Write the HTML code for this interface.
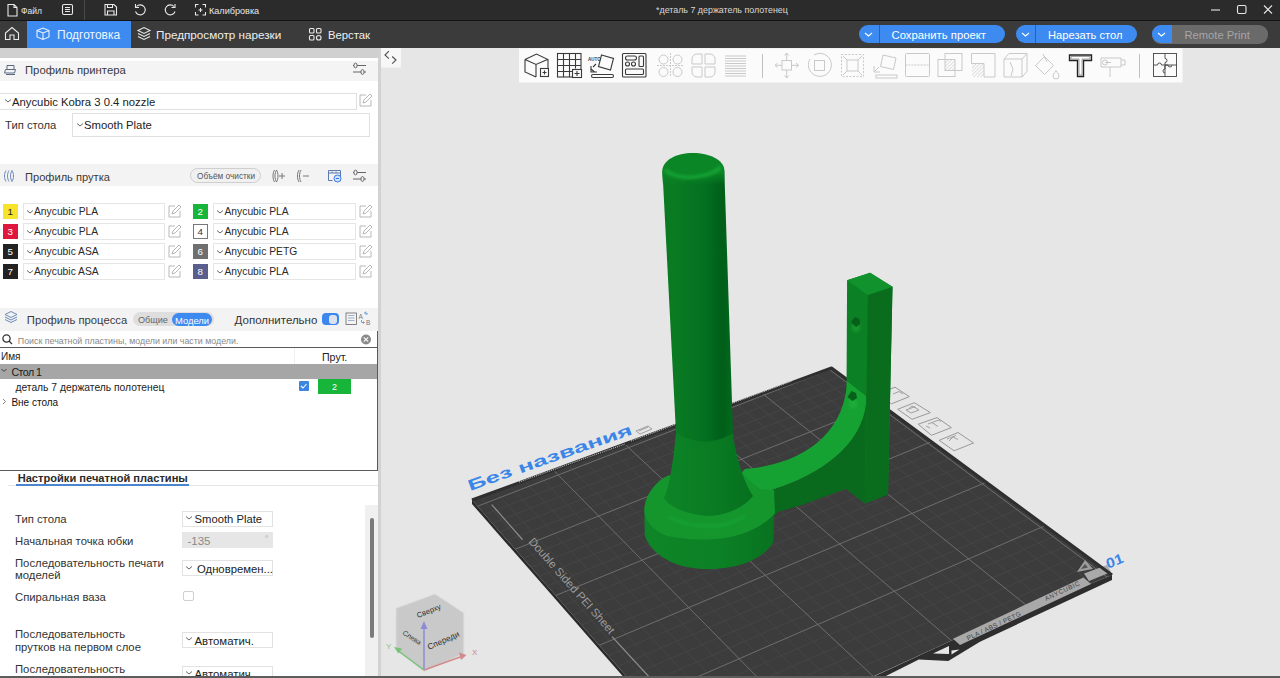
<!DOCTYPE html>
<html><head><meta charset="utf-8">
<style>
*{margin:0;padding:0;box-sizing:border-box}
html,body{width:1280px;height:678px;overflow:hidden;background:#e6e6e6;font-family:"Liberation Sans",sans-serif;position:relative}
.a{position:absolute;white-space:nowrap;line-height:normal}
svg{position:absolute;overflow:visible}
</style></head><body>
<div class="a" style="left:0px;top:0px;width:1280px;height:20px;background:#2b2b2b;"></div>
<div class="a" style="left:0px;top:20px;width:1280px;height:1px;background:#141414;"></div>
<div class="a" style="left:84px;top:0px;width:1px;height:20px;background:#4a4a4a;"></div>
<div class="a" style="left:21px;top:5.92px;font-size:8.5px;color:#e8e8e8;font-weight:normal;">Файл</div>
<div class="a" style="left:209px;top:5.53px;font-size:9.1px;color:#e8e8e8;font-weight:normal;">Калибровка</div>
<div class="a" style="left:656px;top:4.93px;font-size:8.9px;color:#d8d8d8;font-weight:normal;">*деталь 7 держатель полотенец</div>
<div class="a" style="left:0px;top:21px;width:1280px;height:27px;background:#3b3b3b;"></div>
<div class="a" style="left:27px;top:21px;width:104px;height:27px;background:#3d8bf0;"></div>
<div class="a" style="left:57px;top:28.24px;font-size:12px;color:#eef5ff;font-weight:normal;">Подготовка</div>
<div class="a" style="left:156px;top:28.38px;font-size:11.7px;color:#eeeeee;font-weight:normal;">Предпросмотр нарезки</div>
<div class="a" style="left:328px;top:28.58px;font-size:11.3px;color:#eeeeee;font-weight:normal;">Верстак</div>
<div class="a" style="left:859px;top:25px;width:146px;height:18px;background:#3d8bf0;border-radius:9px"></div>
<div class="a" style="left:879px;top:25px;width:1px;height:18px;background:#2a62b0;"></div>
<div class="a" style="left:891.5px;top:28.78px;font-size:11.3px;color:#ffffff;font-weight:normal;">Сохранить проект</div>
<div class="a" style="left:1016px;top:25px;width:121px;height:18px;background:#3d8bf0;border-radius:9px"></div>
<div class="a" style="left:1035px;top:25px;width:1px;height:18px;background:#2a62b0;"></div>
<div class="a" style="left:1048px;top:28.85px;font-size:11.15px;color:#ffffff;font-weight:normal;">Нарезать стол</div>
<div class="a" style="left:1152px;top:25px;width:115.5px;height:18.5px;background:#6a6a6a;border-radius:9px"></div>
<div class="a" style="left:1152px;top:25px;width:20px;height:18px;background:#3d8bf0;border-radius:9px 0 0 9px"></div>
<div class="a" style="left:1184.5px;top:28.82px;font-size:11.2px;color:#a6a6a6;font-weight:normal;">Remote Print</div>
<div class="a" style="left:0px;top:48px;width:378px;height:630px;background:#ffffff;"></div>
<div class="a" style="left:0px;top:48px;width:378px;height:10px;background:#d0d0d0;"></div>
<div class="a" style="left:378px;top:48px;width:3px;height:630px;background:#d2d2d2;"></div>
<div class="a" style="left:0px;top:61px;width:378px;height:20px;background:#f4f4f4;"></div>
<div class="a" style="left:25px;top:63.68px;font-size:11.3px;color:#3a3a3a;font-weight:normal;">Профиль принтера</div>
<div class="a" style="left:0px;top:93px;width:357px;height:17px;background:#fff;border:1px solid #e0e0e0;border-left:none"></div>
<div class="a" style="left:12px;top:95.88px;font-size:11.3px;color:#222;font-weight:normal;">Anycubic Kobra 3 0.4 nozzle</div>
<div class="a" style="left:5px;top:118.90px;font-size:11.25px;color:#333;font-weight:normal;">Тип стола</div>
<div class="a" style="left:72px;top:113px;width:298px;height:24px;background:#fff;border:1px solid #e0e0e0"></div>
<div class="a" style="left:84px;top:119.08px;font-size:11.3px;color:#222;font-weight:normal;">Smooth Plate</div>
<div class="a" style="left:0px;top:164px;width:378px;height:22px;background:#f3f3f3;"></div>
<div class="a" style="left:25px;top:170.67px;font-size:11.1px;color:#3a3a3a;font-weight:normal;">Профиль прутка</div>
<div class="a" style="left:190px;top:168px;width:71px;height:15px;background:#f0f0f0;border:1px solid #cfcfcf;border-radius:8px"></div>
<div class="a" style="left:197px;top:172.04px;font-size:8.25px;color:#555;font-weight:normal;">Объём очистки</div>
<div class="a" style="left:3px;top:204px;width:15px;height:15px;background:#f7e32a;"></div>
<div class="a" style="left:7.6px;top:206.10px;font-size:9.8px;color:#222;font-weight:normal;">1</div>
<div class="a" style="left:23px;top:203px;width:142px;height:17px;background:#fff;border:1px solid #e6e6e6"></div>
<div class="a" style="left:34px;top:206.06px;font-size:10.3px;color:#2a2a2a;font-weight:normal;">Anycubic PLA</div>
<div class="a" style="left:193px;top:204px;width:15px;height:15px;background:#17b53a;"></div>
<div class="a" style="left:197.6px;top:206.10px;font-size:9.8px;color:#fff;font-weight:normal;">2</div>
<div class="a" style="left:213px;top:203px;width:143px;height:17px;background:#fff;border:1px solid #e6e6e6"></div>
<div class="a" style="left:224.5px;top:206.06px;font-size:10.3px;color:#2a2a2a;font-weight:normal;">Anycubic PLA</div>
<div class="a" style="left:3px;top:224px;width:15px;height:15px;background:#e0173c;"></div>
<div class="a" style="left:7.6px;top:226.10px;font-size:9.8px;color:#fff;font-weight:normal;">3</div>
<div class="a" style="left:23px;top:223px;width:142px;height:17px;background:#fff;border:1px solid #e6e6e6"></div>
<div class="a" style="left:34px;top:226.06px;font-size:10.3px;color:#2a2a2a;font-weight:normal;">Anycubic PLA</div>
<div class="a" style="left:193px;top:224px;width:15px;height:15px;background:#fff;border:1px solid #777;"></div>
<div class="a" style="left:197.6px;top:226.10px;font-size:9.8px;color:#333;font-weight:normal;">4</div>
<div class="a" style="left:213px;top:223px;width:143px;height:17px;background:#fff;border:1px solid #e6e6e6"></div>
<div class="a" style="left:224.5px;top:226.06px;font-size:10.3px;color:#2a2a2a;font-weight:normal;">Anycubic PLA</div>
<div class="a" style="left:3px;top:244px;width:15px;height:15px;background:#222;"></div>
<div class="a" style="left:7.6px;top:246.10px;font-size:9.8px;color:#fff;font-weight:normal;">5</div>
<div class="a" style="left:23px;top:243px;width:142px;height:17px;background:#fff;border:1px solid #e6e6e6"></div>
<div class="a" style="left:34px;top:246.06px;font-size:10.3px;color:#2a2a2a;font-weight:normal;">Anycubic ASA</div>
<div class="a" style="left:193px;top:244px;width:15px;height:15px;background:#6f6f6f;"></div>
<div class="a" style="left:197.6px;top:246.10px;font-size:9.8px;color:#fff;font-weight:normal;">6</div>
<div class="a" style="left:213px;top:243px;width:143px;height:17px;background:#fff;border:1px solid #e6e6e6"></div>
<div class="a" style="left:224.5px;top:246.06px;font-size:10.3px;color:#2a2a2a;font-weight:normal;">Anycubic PETG</div>
<div class="a" style="left:3px;top:264px;width:15px;height:15px;background:#222;"></div>
<div class="a" style="left:7.6px;top:266.10px;font-size:9.8px;color:#fff;font-weight:normal;">7</div>
<div class="a" style="left:23px;top:263px;width:142px;height:17px;background:#fff;border:1px solid #e6e6e6"></div>
<div class="a" style="left:34px;top:266.06px;font-size:10.3px;color:#2a2a2a;font-weight:normal;">Anycubic ASA</div>
<div class="a" style="left:193px;top:264px;width:15px;height:15px;background:#5a5e8c;"></div>
<div class="a" style="left:197.6px;top:266.10px;font-size:9.8px;color:#fff;font-weight:normal;">8</div>
<div class="a" style="left:213px;top:263px;width:143px;height:17px;background:#fff;border:1px solid #e6e6e6"></div>
<div class="a" style="left:224.5px;top:266.06px;font-size:10.3px;color:#2a2a2a;font-weight:normal;">Anycubic PLA</div>
<div class="a" style="left:0px;top:308px;width:378px;height:23px;background:#f3f3f3;"></div>
<div class="a" style="left:26.8px;top:314.10px;font-size:11.25px;color:#3a3a3a;font-weight:normal;">Профиль процесса</div>
<div class="a" style="left:132.6px;top:312.2px;width:81px;height:14.2px;background:#dedede;border-radius:7px"></div>
<div class="a" style="left:171.8px;top:313px;width:40.6px;height:13px;background:#3d8bf0;border-radius:7px"></div>
<div class="a" style="left:137.9px;top:315.13px;font-size:9.1px;color:#666;font-weight:normal;">Общие</div>
<div class="a" style="left:175px;top:314.99px;font-size:9.4px;color:#fff;font-weight:normal;">Модели</div>
<div class="a" style="left:234.6px;top:313.78px;font-size:11.5px;color:#333;font-weight:normal;">Дополнительно</div>
<div class="a" style="left:321.5px;top:313.2px;width:17.5px;height:12.2px;background:#3d86ee;border-radius:4px"></div>
<div class="a" style="left:328.5px;top:315px;width:8.5px;height:8.5px;background:#dde3ee;border-radius:3px"></div>
<div class="a" style="left:0px;top:331px;width:377px;height:16px;background:#fff;"></div>
<div class="a" style="left:0px;top:347px;width:378px;height:1px;background:#5a5a5a;"></div>
<div class="a" style="left:17.8px;top:335.95px;font-size:8.85px;color:#8a8a8a;font-weight:normal;">Поиск печатной пластины, модели или части модели.</div>
<div class="a" style="left:377px;top:331px;width:1px;height:140px;background:#5a5a5a;"></div>
<div class="a" style="left:1px;top:351.20px;font-size:10px;color:#222;font-weight:normal;">Имя</div>
<div class="a" style="left:322px;top:351.41px;font-size:10.6px;color:#222;font-weight:normal;">Прут.</div>
<div class="a" style="left:293.5px;top:348px;width:1px;height:16px;background:#f0f0f0;"></div>
<div class="a" style="left:0px;top:364px;width:377px;height:15px;background:#a6a6a6;"></div>
<div class="a" style="left:11.4px;top:365.91px;font-size:10.6px;color:#1a1a1a;font-weight:normal;letter-spacing:-0.5px">Стол 1</div>
<div class="a" style="left:15.4px;top:381.86px;font-size:10.3px;color:#222;font-weight:normal;">деталь 7 держатель полотенец</div>
<div class="a" style="left:299.2px;top:381.3px;width:10px;height:10px;background:#3a86e0;border-radius:1px"></div>
<div class="a" style="left:318px;top:378.8px;width:33px;height:15px;background:#17b53a;"></div>
<div class="a" style="left:332px;top:382.18px;font-size:9px;color:#fff;font-weight:normal;">2</div>
<div class="a" style="left:11.4px;top:396.90px;font-size:10px;color:#111;font-weight:normal;">Вне стола</div>
<div class="a" style="left:0px;top:470px;width:378px;height:1px;background:#5a5a5a;"></div>
<div class="a" style="left:17.7px;top:471.87px;font-size:11.1px;color:#2a2a2a;font-weight:bold;">Настройки печатной пластины</div>
<div class="a" style="left:8px;top:485px;width:370px;height:1px;background:#e6e6e6;"></div>
<div class="a" style="left:16px;top:484px;width:173px;height:1.5px;background:#4a86d0;"></div>
<div class="a" style="left:15px;top:512.88px;font-size:11.3px;color:#333;font-weight:normal;">Тип стола</div>
<div class="a" style="left:15px;top:534.88px;font-size:11.3px;color:#333;font-weight:normal;">Начальная точка юбки</div>
<div class="a" style="left:15px;top:556.58px;font-size:11.3px;color:#333;font-weight:normal;">Последовательность печати</div>
<div class="a" style="left:15px;top:569.08px;font-size:11.3px;color:#333;font-weight:normal;">моделей</div>
<div class="a" style="left:15px;top:590.88px;font-size:11.3px;color:#333;font-weight:normal;">Спиральная ваза</div>
<div class="a" style="left:15px;top:628.38px;font-size:11.3px;color:#333;font-weight:normal;">Последовательность</div>
<div class="a" style="left:15px;top:640.58px;font-size:11.3px;color:#333;font-weight:normal;">прутков на первом слое</div>
<div class="a" style="left:15px;top:662.58px;font-size:11.3px;color:#333;font-weight:normal;">Последовательность</div>
<div class="a" style="left:182.3px;top:510.8px;width:91px;height:16.1px;background:#fff;border:1px solid #e2e2e2"></div>
<div class="a" style="left:194.5px;top:513.10px;font-size:11.25px;color:#222;font-weight:normal;">Smooth Plate</div>
<div class="a" style="left:182.3px;top:532.3px;width:91px;height:16.1px;background:#e6e6e6;"></div>
<div class="a" style="left:187.5px;top:534.78px;font-size:11.5px;color:#8a8a8a;font-weight:normal;">-135</div>
<div class="a" style="left:265px;top:534.16px;font-size:8px;color:#999;font-weight:normal;">°</div>
<div class="a" style="left:182.3px;top:560.3px;width:91px;height:16.1px;background:#fff;border:1px solid #e2e2e2"></div>
<div class="a" style="left:197px;top:562.88px;font-size:11.3px;color:#222;font-weight:normal;">Одновремен...</div>
<div class="a" style="left:183.3px;top:591.2px;width:11.2px;height:10.3px;background:#fff;border:1px solid #cfcfcf;border-radius:2px"></div>
<div class="a" style="left:182.3px;top:632px;width:91px;height:16.1px;background:#fff;border:1px solid #e2e2e2"></div>
<div class="a" style="left:194.5px;top:634.53px;font-size:11.4px;color:#222;font-weight:normal;">Автоматич.</div>
<div class="a" style="left:182.3px;top:665.8px;width:91px;height:16.1px;background:#fff;border:1px solid #e2e2e2"></div>
<div class="a" style="left:194.5px;top:668.33px;font-size:11.4px;color:#222;font-weight:normal;">Автоматич.</div>
<div class="a" style="left:365px;top:505px;width:13px;height:173px;background:#f0f0f0;"></div>
<div class="a" style="left:369.8px;top:517.9px;width:3.8px;height:120px;background:#7a7a7a;border-radius:2px"></div>
<svg id="scene" width="900" height="630" viewBox="380 48 900 630" style="left:380px;top:48px;overflow:hidden"><polygon points="472.0,500.0 697.0,757.0 697,761 472,504" fill="#2b2b2b"/>
<polygon points="1112,575 1112,580 980,641.7 948.3,661 918.8,659.5 880,679 697,763 697,757 876,675.6 951.6,640.6" fill="#2e2e2e"/>
<polygon points="933,653.5 949,646 949,654" fill="#e6e6e6"/><polygon points="951.5,650.5 959.5,649.5 951.5,654.5" fill="#e6e6e6"/>
<polygon points="472.0,500.0 831.5,368.0 1112,575 951.6,640.6 697.0,757.0" fill="#3c3c3c"/>
<clipPath id="bedclip"><polygon points="472.0,500.0 831.5,368.0 1112,575 951.6,640.6 697.0,757.0"/></clipPath>
<path clip-path="url(#bedclip)" d="M703.8,771.6L462.6,498.8M720.9,763.9L477.1,493.2M738.0,756.1L491.6,487.6M754.9,748.5L506.1,482.0M771.7,740.8L520.4,476.5M788.5,733.3L534.7,471.0M805.1,725.7L548.9,465.5M821.6,718.3L563.1,460.0M838.0,710.8L577.1,454.6M854.3,703.5L591.1,449.2M870.5,696.1L605.0,443.8M886.6,688.8L618.9,438.5M902.6,681.6L632.7,433.2M918.6,674.4L646.4,427.9M934.4,667.2L660.1,422.6M950.1,660.1L673.6,417.4M965.7,653.0L687.2,412.2M981.3,646.0L700.6,407.0M996.7,639.0L714.0,401.8M1012.1,632.0L727.3,396.7M1027.3,625.1L740.6,391.6M1042.5,618.2L753.7,386.5M1057.6,611.4L766.9,381.5M1072.6,604.6L779.9,376.4M1087.5,597.9L792.9,371.4M1102.3,591.1L805.8,366.4M1117.0,584.5L818.7,361.5M1131.7,577.8L831.5,356.5M703.8,771.6L1134.6,576.5M693.0,759.4L1121.3,566.8M682.4,747.4L1108.2,557.1M671.9,735.5L1095.4,547.7M661.6,723.9L1082.7,538.4M651.5,712.5L1070.2,529.2M641.5,701.2L1057.9,520.1M631.7,690.1L1045.7,511.2M622.1,679.2L1033.8,502.4M612.6,668.5L1022.0,493.8M603.3,657.9L1010.4,485.2M594.1,647.5L999.0,476.8M585.0,637.3L987.7,468.5M576.1,627.2L976.6,460.3M567.3,617.2L965.6,452.3M558.6,607.4L954.8,444.3M550.1,597.8L944.2,436.5M541.7,588.3L933.6,428.8M533.4,578.9L923.3,421.1M525.2,569.7L913.0,413.6M517.2,560.6L902.9,406.2M509.3,551.6L893.0,398.9M501.5,542.8L883.2,391.6M493.8,534.1L873.5,384.5M486.2,525.5L863.9,377.5M478.7,517.0L854.4,370.5M471.3,508.7L845.1,363.6M464.0,500.4L835.9,356.9" stroke="#474747" stroke-width="0.8" fill="none"/>
<path clip-path="url(#bedclip)" d="M805.1,725.7L548.9,465.5M886.6,688.8L618.9,438.5M965.7,653.0L687.2,412.2M1042.5,618.2L753.7,386.5M1117.0,584.5L818.7,361.5M641.5,701.2L1057.9,520.1M594.1,647.5L999.0,476.8M550.1,597.8L944.2,436.5M509.3,551.6L893.0,398.9M471.3,508.7L845.1,363.6" stroke="#6c6c6c" stroke-width="1" fill="none"/>
<path d="M491.7,504.6 L522.6,539.7 M612,636.6 L651,679" stroke="#8c8c8c" stroke-width="1.3"/>
<text transform="matrix(0.66,0.75,-0.75,0.66,528,542)" font-family="Liberation Sans" font-size="11.5" fill="#9a9a9a">Double Sided PEI Sheet</text>
<polygon points="953,638.7 1083.4,577.4 1091,584 960,645" fill="#a9a9a9"/>
<polygon points="1084,573.5 1107,565 1111,572 1089,581" fill="#a9a9a9"/>
<text transform="matrix(0.905,-0.425,0.425,0.905,968,640.5)" font-family="Liberation Sans" font-size="6.5" fill="#444" letter-spacing="0.4">PLA / ABS / PETG</text>
<text transform="matrix(0.905,-0.425,0.425,0.905,1046,601)" font-family="Liberation Sans" font-size="6.5" fill="#444" letter-spacing="0.6">ANYCUBIC</text>
<path d="M1077,572 l8,-12 8,9z" fill="#9c9c9c"/><path d="M1081,569 l4,-5 3,3.5z" fill="#555"/>
<text transform="matrix(0.95,-0.42,0.3,0.85,1108,569)" font-family="Liberation Sans" font-weight="bold" font-size="15.5" fill="#3a86e8">01</text>
<text transform="matrix(1.36,-0.475,0.3,0.8,470,491)" font-family="Liberation Sans" font-weight="bold" font-size="18" fill="#3a86e8">Без названия</text>
<g fill="none" stroke="#a0a0a0" stroke-width="1"><path d="M636,431 l12,-5 4,3 -12,5z M639,431 l9,-4"/></g>
<polygon points="897.7,409.3 914.3,402.7 930.4,412.6 912.1,419.3" fill="none" stroke="#999" stroke-width="1" stroke-linejoin="round"/>
<polygon points="918.2,424.2 937,417.6 951.4,427.6 931.5,435.3" fill="none" stroke="#999" stroke-width="1" stroke-linejoin="round"/>
<polygon points="939.2,440.3 958,432.5 973.5,443 954.1,450.8" fill="none" stroke="#999" stroke-width="1" stroke-linejoin="round"/>
<polygon points="877,394 895,387.2 909.3,396.6 891.6,403.8" fill="none" stroke="#999" stroke-width="1" stroke-linejoin="round"/>
<g fill="none" stroke="#999" stroke-width="0.9"><path d="M906,410 l8,-3 5,3 -8,3z M909,408.5 l3,-2.5 4,1.5"/><path d="M926,426 l4,2 M928,424 l8,-3 M932,422.5 l6,4 M936,421 l3,-1 2,1.5"/><path d="M947,439 l9,-3.5 M949,441 l4,-4 5,2.5"/><path d="M893,394 l6,-2.5 4,2.5"/></g>
<path d="M472.0,500.0 L831.5,368.0 L1112.0,575.0" stroke="#2f2f2f" stroke-width="3" fill="none" stroke-linejoin="round"/>
<path d="M519,482 L625,444 M631,441 L792,381" stroke="#b8b8b8" stroke-width="1.2" stroke-dasharray="1 1"/><defs>
<linearGradient id="gpole" x1="0" x2="1" y1="0" y2="0"><stop offset="0" stop-color="#0a7a22"/><stop offset="0.15" stop-color="#0b7b23"/><stop offset="0.6" stop-color="#037020"/><stop offset="0.85" stop-color="#005e19"/><stop offset="1" stop-color="#026a1c"/></linearGradient>
<linearGradient id="gcone" x1="0" x2="1" y1="0" y2="0"><stop offset="0" stop-color="#0d8426"/><stop offset="0.5" stop-color="#0a7c23"/><stop offset="1" stop-color="#06701f"/></linearGradient>
<linearGradient id="gside" x1="0" x2="1" y1="0" y2="0"><stop offset="0" stop-color="#0e8627"/><stop offset="0.6" stop-color="#0c8025"/><stop offset="1" stop-color="#087220"/></linearGradient>
<linearGradient id="gcap" x1="0" x2="0" y1="0" y2="1"><stop offset="0" stop-color="#118d2b"/><stop offset="1" stop-color="#17972f"/></linearGradient>
<filter id="blur1" x="-20%" y="-50%" width="140%" height="200%"><feGaussianBlur stdDeviation="1.6"/></filter>
</defs>
<polygon points="847.1,280.3 870.1,272.7 892.5,286.8 888.0,494.6 865.0,503.4 846.0,488.7" fill="#0c8024"/>
<polygon points="867.8,295.0 892.5,286.8 888.0,494.6 865.0,503.4" fill="#0a6d1e"/>
<polygon points="847.1,280.3 870.1,272.7 892.5,286.8 867.8,295.0" fill="#12922c"/>
<path d="M847,381 L866,396 L865,503.4 L846,488.7 L802,505 L778,512 L769,522 L769,490 L774,489 C820,475 862,445 866,403 Z" fill="#09691c"/>
<path d="M847,381 C845,432 805,464 745,469 L735,480 L760,495 L774,489 C820,475 862,445 866,403 L866,396 Z" fill="#16a232"/>
<path d="M644.2,506 L644.8,535 C649,550 665,561 682,566 C702,571 726,570 746,563 C760,557 770,550 773.5,541 L774,516 L774.5,490 L760,495 Z" fill="url(#gside)"/>
<path d="M644.7,513 C646,523 655,532 668,536 C690,541 720,541 742,534 C758,528 770,520 775,513 L774,490 L760,489 C745,478 740,470 735,465 C720,470 690,470 667,476 C655,482 646,495 644.7,506 Z" fill="#14962d"/>
<path d="M676,433 C673,462 670,485 664,498 C668,506 685,514 706,516 C728,516 745,506 753,496 C745,484 737,462 732.6,433 Z" fill="url(#gcone)"/>
<path d="M668,517 C682,524 700,526.5 714,526 C727,525 737,521 745,516" stroke="#19a836" stroke-width="2.5" fill="none" filter="url(#blur1)" opacity="0.75"/>
<path d="M662.5,172 L676,433 C685,439 700,442 706,441.4 C715,441 726,438 733,433 L724.3,170 Z" fill="url(#gpole)"/>
<linearGradient id="gcap2" x1="0" x2="0" y1="0" y2="1"><stop offset="0" stop-color="#0b8626"/><stop offset="0.6" stop-color="#0b8626"/><stop offset="1" stop-color="#0b8626" stop-opacity="0"/></linearGradient><path d="M662.2,185 L662.2,171 C663,160 676,153 693,153 C710,153 723,160 724.2,169 L724.6,185 Z" fill="url(#gcap2)"/>
<path d="M665,170 C672,176 684,178 694,177 C706,176 716,172 721,167" stroke="#16a534" stroke-width="3.5" fill="none" filter="url(#blur1)"/>
<ellipse cx="856" cy="327.5" rx="4.2" ry="4.5" fill="#14962e" filter="url(#blur1)"/><path d="M851,322 l4,-5 4.5,2 0.5,5 -4,3z" fill="#065e19"/>
<ellipse cx="853" cy="404" rx="4.2" ry="5" fill="#1cac38" filter="url(#blur1)"/><path d="M847.5,397 l4,-6 4.5,2 1,5 -4.5,3z" fill="#06601a"/><rect x="519" y="48.5" width="663.5" height="34" fill="#fbfbfb"/>
<g fill="none" stroke="#3a3a3a" stroke-width="1.1"><path d="M525 59.5l11.5-5.5 11.5 5.5v8.5 M525 59.5v12.5l11 5 M525 59.5l11 5 11.5-5 M536 64.5v12.5"/><rect x="540.5" y="68.5" width="8" height="8" fill="#fbfbfb"/><path d="M544.5 70.5v4M542.5 72.5h4"/></g>
<g fill="none" stroke="#3a3a3a" stroke-width="1.1"><rect x="557.5" y="53.5" width="23.5" height="23.5"/><path d="M563.5 53.5v23.5M569.5 53.5v23.5M575.5 53.5v15M557.5 59.5h23.5M557.5 65.5h23.5M557.5 71.5h15"/><rect x="572.5" y="69.5" width="9" height="8" fill="#fbfbfb"/><path d="M577 71v5M574.5 73.5h5"/></g>
<g fill="none" stroke="#3a3a3a" stroke-width="1.1"><path d="M601.5 55l12 3.5-3 11.5-12-3.5z"/><path d="M593 67l3-3M590.5 68.5l4 3.5M591 66v6h6"/><rect x="591.5" y="74.5" width="22" height="3" rx="1.5"/></g><text x="588" y="61" font-size="4.5" font-family="Liberation Sans" font-weight="bold" fill="#3a3a3a">AUTO</text>
<g fill="none" stroke="#3a3a3a" stroke-width="1.1"><rect x="622.5" y="53.5" width="23.5" height="23.5" rx="1"/><rect x="625.5" y="56" width="11" height="4" rx="2"/><rect x="639" y="56" width="4.5" height="10.5" rx="1"/><circle cx="627.5" cy="64" r="2"/><circle cx="633.5" cy="64" r="2"/><rect x="625.5" y="69" width="18" height="5.5" rx="1"/></g>
<g fill="none" stroke="#c9c9c9" stroke-width="1"><circle cx="663.5" cy="59.5" r="4.5"/><circle cx="677.5" cy="59.5" r="4.5"/><circle cx="663.5" cy="72" r="4.5"/><circle cx="677.5" cy="72" r="4.5"/><path d="M670.5 53v24M657 65.5h26" stroke-dasharray="2 1"/></g>
<g fill="none" stroke="#c9c9c9" stroke-width="1"><path d="M702 54h-5a5 5 0 0 0-5 5v5h10z M705 54h5a5 5 0 0 1 5 5v5h-10z M702 77h-5a5 5 0 0 1-5-5v-5h10z M705 77h5a5 5 0 0 0 5-5v-5h-10z"/></g>
<g fill="none" stroke="#c9c9c9" stroke-width="1.2"><path d="M725 56h21M725 58.5h21M725 61h21M725 63.5h21M725 66h21M725 68.5h21M725 71h21M725 73.5h21M725 76h21"/></g>
<path d="M762.5 54v24" stroke="#c0c0c0" stroke-width="1"/>
<g fill="none" stroke="#c9c9c9" stroke-width="1"><rect x="782" y="60.5" width="9.5" height="9.5"/><path d="M786.7 53v7M786.7 70v8M775 65.3h7M791.5 65.3h7 M784.5 55.5l2.2-2.5 2.2 2.5 M784.5 75.5l2.2 2.5 2.2-2.5 M777.5 63l-2.5 2.3 2.5 2.3 M796 63l2.5 2.3-2.5 2.3"/></g>
<g fill="none" stroke="#c9c9c9" stroke-width="1"><rect x="814.5" y="60.5" width="10" height="10"/><path d="M810 59a11.5 11.5 0 1 0 4-4"/></g>
<g fill="none" stroke="#c9c9c9" stroke-width="1"><rect x="847" y="60" width="11" height="11"/><rect x="841.5" y="54.5" width="22" height="22" stroke-dasharray="2 1.5"/><path d="M843 56l4 4M862 56l-4 4M843 75l4-4M862 75l-4-4"/></g>
<g fill="none" stroke="#c9c9c9" stroke-width="1"><path d="M883 55l13 3-2.5 11.5-13-3z M874 72l5-5M874 66v6h6"/><rect x="876" y="75" width="21" height="3"/></g>
<g fill="none" stroke="#c9c9c9" stroke-width="1"><rect x="905.5" y="53.5" width="24" height="23" rx="1"/><path d="M905.5 65h24" stroke-dasharray="2 1"/></g>
<defs><pattern id="hatch" width="2.5" height="2.5" patternUnits="userSpaceOnUse" patternTransform="rotate(45)"><rect width="2.5" height="2.5" fill="#fbfbfb"/><path d="M0 0v2.5" stroke="#c4c4c4" stroke-width="1"/></pattern></defs><rect x="945" y="59.5" width="10" height="11" fill="url(#hatch)"/><g fill="none" stroke="#c9c9c9" stroke-width="1"><rect x="938" y="59.5" width="17" height="17"/><rect x="945" y="53.5" width="17" height="17"/></g>
<rect x="972" y="63.5" width="12" height="13.5" fill="url(#hatch)"/><path d="M971.5 53.5H995V77h-11V63.5h-12.5z" fill="none" stroke="#c9c9c9" stroke-width="1"/>
<g fill="none" stroke="#c9c9c9" stroke-width="1"><path d="M1004 59l5-5.5h18v18l-5 5.5h-18z M1004 59h18v18 M1022 59l5-5.5 M1010 62l3 7-2 7"/></g>
<g fill="none" stroke="#c9c9c9" stroke-width="1"><path d="M1035.5 65.5l9-9 9 9-9 9z M1043 54l4 8 M1056 70.5c-2 3-3 4-3 5.5a3 3 0 0 0 6 0c0-1.5-1-2.5-3-5.5z"/></g>
<path d="M1069.5 55h22v5.5h-8v16h-6v-16h-8z" fill="#fff" stroke="#222" stroke-width="1.4"/><path d="M1071 56.5h19v2.5h-8v16h-3v-16h-8z" fill="none" stroke="#666" stroke-width="0.6"/>
<g fill="none" stroke="#c9c9c9" stroke-width="1"><path d="M1101 58h20v9h-20z M1110 67v10 M1105 62.5h6 M1121 60h4v5h-4"/><circle cx="1105" cy="62.5" r="2.5"/></g>
<path d="M1139.5 54v24" stroke="#c0c0c0" stroke-width="1"/>
<g fill="none" stroke="#444" stroke-width="0.9"><rect x="1153.5" y="53.5" width="23" height="23"/><path d="M1165 53.5v5a2 2 0 0 1 0 4v14.5 M1153.5 65h4a2 2 0 0 1 4 0h15.5 M1165 65v4a2 2 0 0 0 0 4 M1165 65h3a2 2 0 0 0 4 0"/></g>
<rect x="381" y="48" width="20" height="19.5" fill="#f7f7f7"/>
<path d="M388.9 51.2L385 55l3.9 3.6 M392.2 56.5L396 60l-3.8 3.6" fill="none" stroke="#505050" stroke-width="1.1"/>
<polygon points="435,594 463.9,613 463.9,653.6 424,671.4 396,649.5 396,608.3" fill="#c9c9c9" stroke="#dcdcdc" stroke-width="1"/>
<path d="M424 670v-45" stroke="#8c8cd6" stroke-width="1.5"/><path d="M420.5 629l3.5-8 3.5 8z" fill="#8c8cd6"/>
<path d="M424 670l39-14" stroke="#d38a8a" stroke-width="1.5"/><path d="M459 652.5l7.5 2.5-5.5 5z" fill="#d38a8a"/>
<path d="M424 670l-27-20" stroke="#79c279" stroke-width="1.5"/><path d="M394 647l8 1.5-3.5 5z" fill="#79c279"/>
<text x="472" y="655" font-size="8" font-family="Liberation Sans" fill="#c88a8a">X</text>
<text x="386" y="649" font-size="8" font-family="Liberation Sans" fill="#88c488">Y</text>
<text transform="translate(418,618) rotate(-22)" font-size="7.6" font-family="Liberation Sans" fill="#333">Сверху</text>
<text transform="translate(402,634) rotate(33)" font-size="7" font-family="Liberation Sans" fill="#333">Слева</text>
<text transform="translate(429,650) rotate(-24)" font-size="8.4" font-family="Liberation Sans" fill="#333">Спереди</text></svg><svg width="380" height="678" style="left:0;top:0"><g fill="none" stroke="#5a6a80" stroke-width="1"><path d="M7 65.5h7v4h-7z M5.5 69.5h10l-1 3.5h-10z M6 74.5h9"/></g>
<g fill="none" stroke="#666" stroke-width="1"><path d="M353,65.5h13 M353,72h13"/><ellipse cx="355.5" cy="65.5" rx="1.6" ry="2.4" fill="#f3f3f3"/><ellipse cx="362.5" cy="72" rx="1.6" ry="2.4" fill="#f3f3f3"/></g>
<g fill="none" stroke="#6a8ab8" stroke-width="1"><path d="M6 170.5c-2 3-2 8 0 11 M9 170.5c-2 3-2 8 0 11 M12 170.5c-2 3-2 8 0 11 M12 170.5c2 3 2 8 0 11"/></g>
<g fill="none" stroke="#777" stroke-width="1"><path d="M274.5 170c-2 3-2 9 0 12 M276.5 170c-2 3-2 9 0 12 M276.5 170c2 3 2 9 0 12 M279 176h6 M282 173v6"/></g>
<g fill="none" stroke="#777" stroke-width="1"><path d="M299 170c-2 3-2 9 0 12 M301 170c-2 3-2 9 0 12 M303 176h6"/></g>
<g fill="none" stroke="#5a7ab0" stroke-width="1"><path d="M328.5 180.5v-10h12v6 M328.5 173h12 M332 171.5v1.5 M336 171.5v1.5 M328.5 180.5h4"/><circle cx="337.5" cy="178.5" r="3.5" fill="#cfe0ff" stroke="#3a7ae0"/><path d="M336 178.5h3" stroke="#3a7ae0"/></g>
<g fill="none" stroke="#666" stroke-width="1"><path d="M353,172.5h13 M353,179h13"/><ellipse cx="355.5" cy="172.5" rx="1.6" ry="2.4" fill="#f3f3f3"/><ellipse cx="362.5" cy="179" rx="1.6" ry="2.4" fill="#f3f3f3"/></g>
<g fill="none" stroke="#6a8ab8" stroke-width="1"><path d="M5 314.5l6-3 6 3-6 3z M5 317l6 3 6-3 M5 319.5l6 3 6-3"/></g>
<g fill="none" stroke="#666" stroke-width="0.8"><rect x="346" y="313" width="10.5" height="11.5"/><path d="M348 315.5h6.5M348 318h6.5M348 320.5h6.5" stroke="#8aa0c0"/><text x="358.5" y="318.5" font-size="6.5" font-family="Liberation Sans" fill="#777" stroke="none">A</text><text x="366" y="324.5" font-size="6.5" font-family="Liberation Sans" fill="#777" stroke="none">B</text><path d="M366 311.5l-1.5 1.5 1.5 1.5M364.5 313h2.5v2 M361.5 320v2.5h2.5M363 321.5l1.5 1-1.5 1" stroke="#5a8ad0"/></g>
<path d="M5,99.5l3,2.5 3,-2.5" fill="none" stroke="#555" stroke-width="0.9"/>
<path d="M77,123.5l3,2.5 3,-2.5" fill="none" stroke="#555" stroke-width="0.9"/>
<path d="M27,210.5l3,2.5 3,-2.5" fill="none" stroke="#555" stroke-width="0.9"/>
<path d="M217,210.5l3,2.5 3,-2.5" fill="none" stroke="#555" stroke-width="0.9"/>
<path d="M27,230.5l3,2.5 3,-2.5" fill="none" stroke="#555" stroke-width="0.9"/>
<path d="M217,230.5l3,2.5 3,-2.5" fill="none" stroke="#555" stroke-width="0.9"/>
<path d="M27,250.5l3,2.5 3,-2.5" fill="none" stroke="#555" stroke-width="0.9"/>
<path d="M217,250.5l3,2.5 3,-2.5" fill="none" stroke="#555" stroke-width="0.9"/>
<path d="M27,270.5l3,2.5 3,-2.5" fill="none" stroke="#555" stroke-width="0.9"/>
<path d="M217,270.5l3,2.5 3,-2.5" fill="none" stroke="#555" stroke-width="0.9"/>
<g fill="none" stroke="#b0b0b0" stroke-width="0.9"><path d="M366,95h-6v11h11v-6"/><path d="M363,103l1,-3 6,-6 2,2 -6,6z"/></g>
<g fill="none" stroke="#b0b0b0" stroke-width="0.9"><path d="M175,206h-6v11h11v-6"/><path d="M172,214l1,-3 6,-6 2,2 -6,6z"/></g>
<g fill="none" stroke="#b0b0b0" stroke-width="0.9"><path d="M366,206h-6v11h11v-6"/><path d="M363,214l1,-3 6,-6 2,2 -6,6z"/></g>
<g fill="none" stroke="#b0b0b0" stroke-width="0.9"><path d="M175,226h-6v11h11v-6"/><path d="M172,234l1,-3 6,-6 2,2 -6,6z"/></g>
<g fill="none" stroke="#b0b0b0" stroke-width="0.9"><path d="M366,226h-6v11h11v-6"/><path d="M363,234l1,-3 6,-6 2,2 -6,6z"/></g>
<g fill="none" stroke="#b0b0b0" stroke-width="0.9"><path d="M175,246h-6v11h11v-6"/><path d="M172,254l1,-3 6,-6 2,2 -6,6z"/></g>
<g fill="none" stroke="#b0b0b0" stroke-width="0.9"><path d="M366,246h-6v11h11v-6"/><path d="M363,254l1,-3 6,-6 2,2 -6,6z"/></g>
<g fill="none" stroke="#b0b0b0" stroke-width="0.9"><path d="M175,266h-6v11h11v-6"/><path d="M172,274l1,-3 6,-6 2,2 -6,6z"/></g>
<g fill="none" stroke="#b0b0b0" stroke-width="0.9"><path d="M366,266h-6v11h11v-6"/><path d="M363,274l1,-3 6,-6 2,2 -6,6z"/></g>
<g fill="none" stroke="#333" stroke-width="1.3"><circle cx="6.5" cy="338.5" r="3.6"/><path d="M9 341l3 3"/></g>
<circle cx="366" cy="339.5" r="5" fill="#8a8a8a"/><path d="M363.8 337.3l4.4 4.4M368.2 337.3l-4.4 4.4" stroke="#fff" stroke-width="1.1"/>
<path d="M1.5 369l2.5 2.5 2.5-2.5" fill="none" stroke="#333" stroke-width="0.9"/>
<path d="M3 399l2.5 2.5-2.5 2.5" fill="none" stroke="#777" stroke-width="0.9"/>
<path d="M301 386l2 2 3.5-4" fill="none" stroke="#fff" stroke-width="1.1"/>
<path d="M186,516.5l3,2.5 3,-2.5" fill="none" stroke="#555" stroke-width="0.9"/>
<path d="M186,566.5l3,2.5 3,-2.5" fill="none" stroke="#555" stroke-width="0.9"/>
<path d="M186,637.5l3,2.5 3,-2.5" fill="none" stroke="#555" stroke-width="0.9"/>
<path d="M186,671.5l3,2.5 3,-2.5" fill="none" stroke="#555" stroke-width="0.9"/></svg>
<svg width="1280" height="678" style="left:0;top:0"><g fill="none" stroke="#e8e8e8" stroke-width="1.1">
 <path d="M8 4.5h6l3 3v8.5h-9z M14 4.5v3h3"/>
 <rect x="62.5" y="4.5" width="10" height="10" rx="1.5"/><path d="M65 7.5h5M65 9.5h5M65 11.5h5"/>
 <path d="M105 4.5h9l2.5 2.5v8h-11.5z M107.5 4.5v3h5v-3 M107.5 15v-4h6.5v4"/>
 <path d="M136.5 6.5a5 5 0 1 1 -1 5" /><path d="M135.5 4v3.5h3.5"/>
 <path d="M174 6.5a5 5 0 1 0 1 5"/><path d="M175 4v3.5h-3.5"/>
 <path d="M195.5 7.5v-3h3 M202.5 4.5h3v3 M205.5 12v3h-3 M198.5 15h-3v-3 M200.5 8v4 M198.5 10h4"/>
 <path d="M1211 10h9"/>
 <rect x="1237.5" y="5.5" width="8.5" height="8" rx="1.5"/>
 <path d="M1264 5.5l8 8M1272 5.5l-8 8"/>
</g>
<g fill="none" stroke="#eaeaea" stroke-width="1.1" transform="translate(0,20)">
 <path d="M5.5 19.5v-6.5l6.5-5.5 6.5 5.5v6.5h-4.5v-4.5h-4v4.5z"/>
 <path stroke="#e8f0ff" d="M37 10.5l6-2.5 6 2.5v6.5l-6 2.5-6-2.5z M37 10.5l6 2.5 6-2.5 M43 13v6.5"/>
 <path d="M138 10.5l6-3 6 3-6 3z M138 13.5l6 3 6-3 M138 16.5l6 3 6-3"/>
 <rect x="309.5" y="8.5" width="4.5" height="4.5" rx="1"/><rect x="316.5" y="8.5" width="4.5" height="4.5" rx="1"/><rect x="309.5" y="15.5" width="4.5" height="4.5" rx="1"/><circle cx="318.75" cy="17.75" r="2.3"/>
 <path stroke="#fff" d="M865 13l3.5 3 3.5-3 M1022 13l3.5 3 3.5-3 M1158 13l3.5 3 3.5-3"/>
</g>
<rect x="0" y="676" width="1280" height="2" fill="#5c5c5c"/></svg>
</body></html>
